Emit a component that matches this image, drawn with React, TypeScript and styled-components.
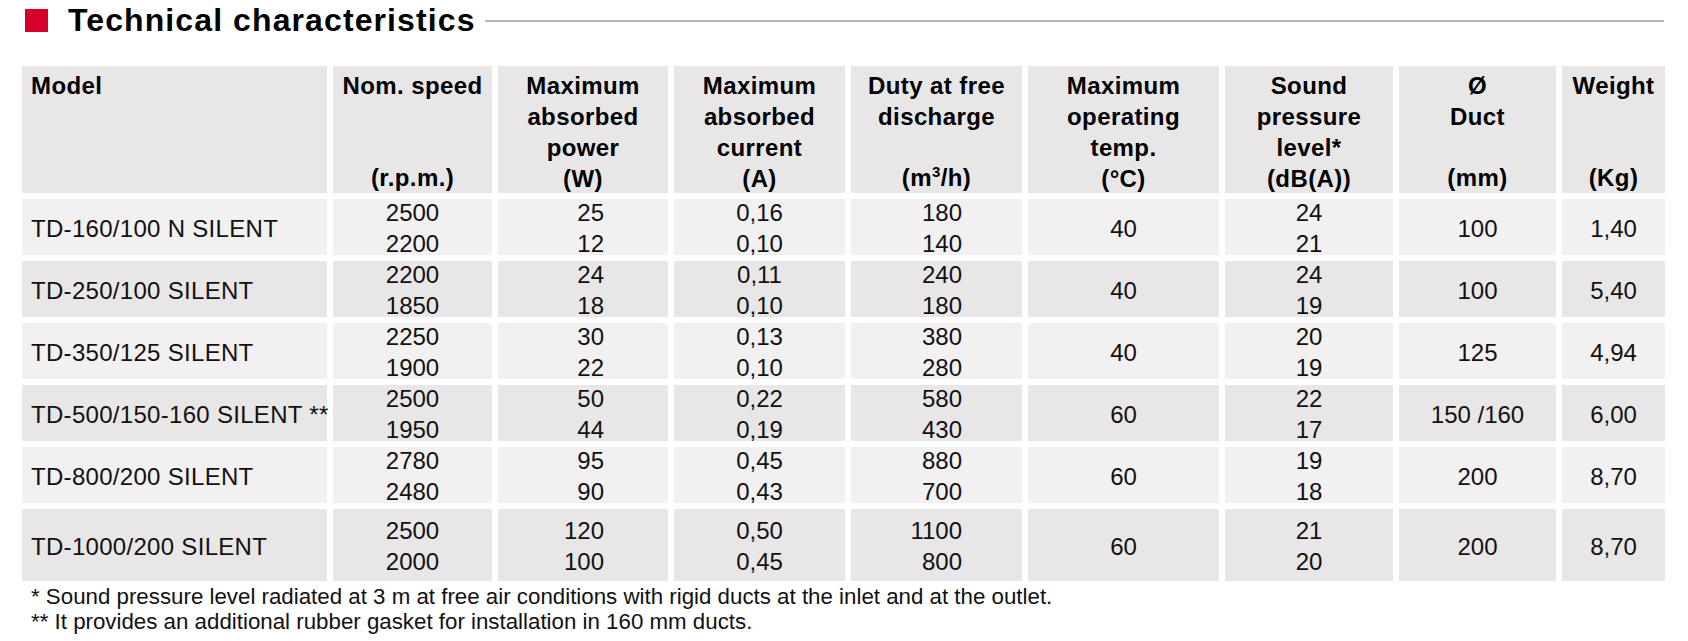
import React from "react";
import styled, { createGlobalStyle } from "styled-components";

type Align = "left" | "center" | "right";

interface Column {
  key: string;
  width: number;
  align: Align;
  padRight?: number;
  title: React.ReactNode[];
  unit?: React.ReactNode;
}

interface ModelRow {
  model: string;
  speed: string[];
  power: string[];
  current: string[];
  duty: string[];
  temp: string;
  sound: string[];
  duct: string;
  weight: string;
}

// used inside the column config, so it has to exist before it
const Sup = styled.sup`
  font-size: 15px;
  line-height: 0;
  vertical-align: 9px;
`;

const columns: Column[] = [
  { key: "model", width: 305, align: "left", title: ["Model"] },
  { key: "speed", width: 159, align: "center", title: ["Nom. speed"], unit: "(r.p.m.)" },
  {
    key: "power",
    width: 170,
    align: "right",
    padRight: 64,
    title: ["Maximum", "absorbed", "power"],
    unit: "(W)",
  },
  {
    key: "current",
    width: 171,
    align: "center",
    title: ["Maximum", "absorbed", "current"],
    unit: "(A)",
  },
  {
    key: "duty",
    width: 171,
    align: "right",
    padRight: 60,
    title: ["Duty at free", "discharge"],
    unit: (
      <>
        (m<Sup>3</Sup>/h)
      </>
    ),
  },
  {
    key: "temp",
    width: 191,
    align: "center",
    title: ["Maximum", "operating", "temp."],
    unit: "(°C)",
  },
  {
    key: "sound",
    width: 168,
    align: "center",
    title: ["Sound", "pressure", "level*"],
    unit: "(dB(A))",
  },
  { key: "duct", width: 157, align: "center", title: ["Ø", "Duct"], unit: "(mm)" },
  { key: "weight", width: 103, align: "center", title: ["Weight"], unit: "(Kg)" },
];

const rows: ModelRow[] = [
  {
    model: "TD-160/100 N SILENT",
    speed: ["2500", "2200"],
    power: ["25", "12"],
    current: ["0,16", "0,10"],
    duty: ["180", "140"],
    temp: "40",
    sound: ["24", "21"],
    duct: "100",
    weight: "1,40",
  },
  {
    model: "TD-250/100 SILENT",
    speed: ["2200", "1850"],
    power: ["24", "18"],
    current: ["0,11", "0,10"],
    duty: ["240", "180"],
    temp: "40",
    sound: ["24", "19"],
    duct: "100",
    weight: "5,40",
  },
  {
    model: "TD-350/125 SILENT",
    speed: ["2250", "1900"],
    power: ["30", "22"],
    current: ["0,13", "0,10"],
    duty: ["380", "280"],
    temp: "40",
    sound: ["20", "19"],
    duct: "125",
    weight: "4,94",
  },
  {
    model: "TD-500/150-160 SILENT **",
    speed: ["2500", "1950"],
    power: ["50", "44"],
    current: ["0,22", "0,19"],
    duty: ["580", "430"],
    temp: "60",
    sound: ["22", "17"],
    duct: "150 /160",
    weight: "6,00",
  },
  {
    model: "TD-800/200 SILENT",
    speed: ["2780", "2480"],
    power: ["95", "90"],
    current: ["0,45", "0,43"],
    duty: ["880", "700"],
    temp: "60",
    sound: ["19", "18"],
    duct: "200",
    weight: "8,70",
  },
  {
    model: "TD-1000/200 SILENT",
    speed: ["2500", "2000"],
    power: ["120", "100"],
    current: ["0,50", "0,45"],
    duty: ["1100", "800"],
    temp: "60",
    sound: ["21", "20"],
    duct: "200",
    weight: "8,70",
  },
];

const gridTemplate = columns.map((c) => `${c.width}px`).join(" ");

export default function App() {
  return (
    <>
      <GlobalStyle />
      <Page>
        <TitleBar>
          <RedSquare />
          <Title>Technical characteristics</Title>
          <Rule />
        </TitleBar>

        <Table>
          <HeaderRow>
            {columns.map((col) => (
              <HeadCell key={col.key} $align={col.align === "left" ? "left" : "center"}>
                <div>
                  {col.title.map((line, i) => (
                    <HeadLine key={i}>{line}</HeadLine>
                  ))}
                </div>
                {col.unit && <HeadLine>{col.unit}</HeadLine>}
              </HeadCell>
            ))}
          </HeaderRow>

          {rows.map((row, idx) => (
            <DataRow key={row.model} $height={idx === rows.length - 1 ? 72 : 56}>
              {columns.map((col) => {
                const value = row[col.key as keyof ModelRow];
                const lines = Array.isArray(value) ? value : [value];
                return (
                  <Cell
                    key={col.key}
                    $align={col.align}
                    $padRight={col.padRight ?? 0}
                    $shade={idx % 2 === 1}
                  >
                    <div>
                      {lines.map((l, i) => (
                        <Line key={i}>{l}</Line>
                      ))}
                    </div>
                  </Cell>
                );
              })}
            </DataRow>
          ))}
        </Table>

        <Notes>
          <Note>
            * Sound pressure level radiated at 3 m at free air conditions with rigid ducts at the
            inlet and at the outlet.
          </Note>
          <Note>** It provides an additional rubber gasket for installation in 160 mm ducts.</Note>
        </Notes>
      </Page>
    </>
  );
}

const GlobalStyle = createGlobalStyle`
  html, body {
    margin: 0;
    padding: 0;
    background: #ffffff;
  }
  body {
    font-family: "Liberation Sans", Arial, Helvetica, sans-serif;
    color: #111;
  }
`;

const Page = styled.div`
  width: 1688px;
  padding: 0 24px 0 22px;
  box-sizing: border-box;
`;

const TitleBar = styled.div`
  display: flex;
  align-items: center;
  height: 41px;
  margin-bottom: 25px;
`;

const RedSquare = styled.div`
  width: 23px;
  height: 23px;
  margin-left: 3px;
  background: #d6002b;
  flex: none;
`;

const Title = styled.h1`
  margin: 0 0 0 20px;
  font-size: 32px;
  font-weight: 700;
  letter-spacing: 1.1px;
  line-height: 41px;
  color: #000;
  white-space: nowrap;
`;

const Rule = styled.div`
  flex: 1;
  height: 2px;
  margin-left: 9px;
  background: #bfb1b6;
`;

const Table = styled.div`
  display: flex;
  flex-direction: column;
  gap: 6px;
  width: 1643px;
`;

const HeaderRow = styled.div`
  display: grid;
  grid-template-columns: ${gridTemplate};
  grid-template-rows: 127px;
  column-gap: 6px;
`;

const HeadCell = styled.div<{ $align: Align }>`
  display: flex;
  flex-direction: column;
  justify-content: space-between;
  background: #e9e6e7;
  padding: 4px 0 0 ${({ $align }) => ($align === "left" ? 9 : 0)}px;
  text-align: ${({ $align }) => $align};
  font-size: 24px;
  font-weight: 700;
  letter-spacing: 0.4px;
  color: #000;
  min-height: 0;
`;

const HeadLine = styled.div`
  line-height: 31px;
  white-space: nowrap;
`;

const DataRow = styled.div<{ $height: number }>`
  display: grid;
  grid-template-columns: ${gridTemplate};
  grid-template-rows: ${({ $height }) => $height}px;
  column-gap: 6px;
`;

const Cell = styled.div<{ $align: Align; $padRight: number; $shade: boolean }>`
  display: flex;
  flex-direction: column;
  justify-content: center;
  min-height: 0;
  background: ${({ $shade }) => ($shade ? "#e9e6e7" : "#f2f0f1")};
  text-align: ${({ $align }) => $align};
  padding-left: ${({ $align }) => ($align === "left" ? 9 : 0)}px;
  padding-right: ${({ $padRight }) => $padRight}px;
  padding-top: 2px;
  font-size: 24px;
  letter-spacing: ${({ $align }) => ($align === "left" ? "0.3px" : "0")};
  color: #111;
`;

const Line = styled.div`
  line-height: 31px;
  white-space: nowrap;
`;

const Notes = styled.div`
  margin-top: 3px;
  padding-left: 9px;
`;

const Note = styled.div`
  font-size: 22.3px;
  line-height: 25px;
  color: #111;
  white-space: nowrap;
`;
